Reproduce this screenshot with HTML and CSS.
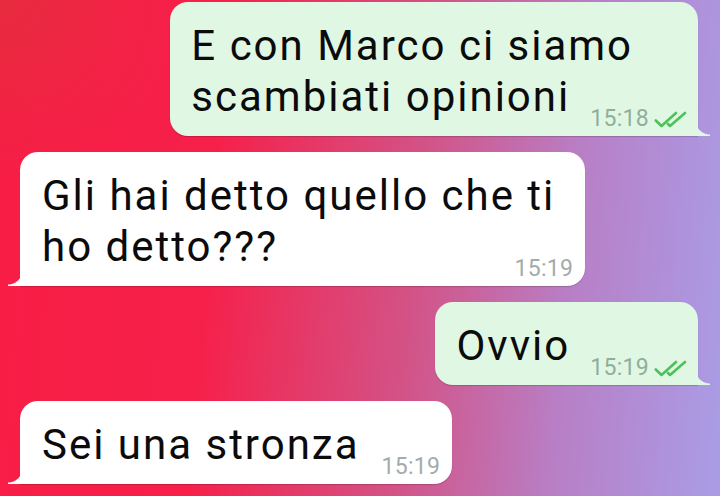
FILE: index.html
```html
<!DOCTYPE html>
<html lang="it">
<head>
  <meta charset="UTF-8">
  <meta name="viewport" content="width=device-width, initial-scale=1.0">
  <title>Chat</title>
  <link rel="stylesheet" href="styles.css">
</head>
<body>
  <main class="chat">
    <div class="bubble out">
      E con Marco ci siamo<br>scambiati opinioni<span class="meta">15:18<svg class="ticks" viewBox="0 0 34 17"><path d="M1.8 9.5L7.5 15L22 2M14 13L16 15L31 2" fill="none" stroke="#4cc25b" stroke-width="2.6" stroke-linecap="round" stroke-linejoin="round"/></svg></span>
    </div>

    <div class="bubble in">
      Gli hai detto quello che ti<br>ho detto???<span class="meta">15:19</span>
    </div>

    <div class="bubble out">
      Ovvio<span class="meta">15:19<svg class="ticks" viewBox="0 0 34 17"><path d="M1.8 9.5L7.5 15L22 2M14 13L16 15L31 2" fill="none" stroke="#4cc25b" stroke-width="2.6" stroke-linecap="round" stroke-linejoin="round"/></svg></span>
    </div>

    <div class="bubble in">
      Sei una stronza<span class="meta">15:19</span>
    </div>
  </main>
</body>
</html>
```

FILE: styles.css
```css
:root {
  --out-color: #e0f7e4;
  --in-color: #ffffff;
  --text-color: #0b0b0b;
}

html, body {
  margin: 0;
  padding: 0;
  height: 100%;
}

body {
  font-family: Roboto, "Noto Sans", Arial, sans-serif;
  color: var(--text-color);
  background:
    radial-gradient(circle at 0 0, rgba(200, 70, 50, 0.35), rgba(200, 70, 50, 0) 180px),
    linear-gradient(95deg, #f81d45 0%, #f6204a 30%, #d25488 58%, #b87fc6 78%, #a99de6 100%);
  overflow: hidden;
}

.chat {
  display: flex;
  flex-direction: column;
  align-items: flex-start;
  gap: 16px;
  padding: 2px 22px 0 20px;
}

.bubble {
  position: relative;
  font-size: 42px;
  line-height: 51px;
  letter-spacing: 2px;
  padding: 18px 30px 5px 22px;
  border-radius: 18px;
  box-shadow: 0 1px 1px rgba(0, 0, 0, 0.18);
}

.bubble.out {
  align-self: flex-end;
  background-color: var(--out-color);
  border-bottom-right-radius: 0;
  padding-left: 21px;
  padding-right: 10px;
}

.bubble.in {
  background-color: var(--in-color);
  border-bottom-left-radius: 0;
}

/* code della nuvoletta */
.bubble::after {
  content: "";
  position: absolute;
  bottom: 0;
  width: 14px;
  height: 16px;
}

.bubble.out::after {
  right: -12px;
  background: radial-gradient(circle at 100% 0, transparent 14px, var(--out-color) 15px);
}

.bubble.in::after {
  left: -12px;
  background: radial-gradient(circle at 0 0, transparent 14px, var(--in-color) 15px);
}

.meta {
  float: right;
  display: flex;
  align-items: center;
  margin-top: 36px;
  margin-left: 20px;
  font-size: 23px;
  line-height: 24px;
  letter-spacing: 0.3px;
  color: #a3abac;
}

.bubble.in .meta {
  margin-left: 22px;
  margin-right: -18px;
}

.bubble.out .meta {
  color: #8faf9c;
}

.ticks {
  width: 34px;
  height: 17px;
  margin-left: 5px;
}
```
